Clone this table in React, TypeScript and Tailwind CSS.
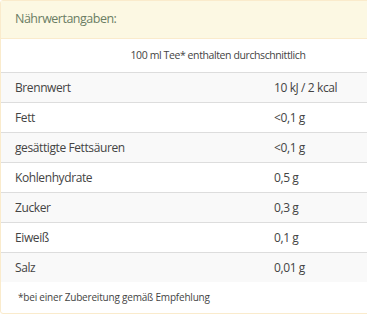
import React from "react";

const rows = [
  { label: "Brennwert", value: "10 kJ / 2 kcal" },
  { label: "Fett", value: "<0,1 g" },
  { label: "gesättigte Fettsäuren", value: "<0,1 g" },
  { label: "Kohlenhydrate", value: "0,5 g" },
  { label: "Zucker", value: "0,3 g" },
  { label: "Eiweiß", value: "0,1 g" },
  { label: "Salz", value: "0,01 g" },
];

export default function App() {
  return (
    <div className="w-[367px] h-[316px] overflow-hidden bg-white font-['Open_Sans',sans-serif] text-[#444]">
      <div className="w-[436px] border border-[#faebcc] rounded-[3px]">
        {/* Heading */}
        <div className="h-[38px] bg-[#fcf8e3] border-b border-[#faebcc] px-[14px] flex items-center text-[12.5px] tracking-[-0.5px] text-[#6b7d63]">
          Nährwertangaben:
        </div>

        {/* Table */}
        <div className="h-[33px] flex items-center justify-center text-[10.5px] tracking-[-0.4px]">
          100 ml Tee* enthalten durchschnittlich
        </div>
        {rows.map((row, i) => (
          <div
            key={row.label}
            className={`h-[30px] grid grid-cols-[265px_1fr] items-center border-t border-[#dddddd] text-[12px] tracking-[-0.4px] ${
              i % 2 === 0 ? "bg-[#f9f9f9]" : "bg-white"
            }`}
          >
            <div className="pl-[14px]">{row.label}</div>
            <div className="pl-[8px]">{row.value}</div>
          </div>
        ))}

        {/* Footer */}
        <div className="h-[31px] flex items-center pl-[17px] text-[10px] tracking-[-0.2px]">
          *bei einer Zubereitung gemäß Empfehlung
        </div>
      </div>
    </div>
  );
}
